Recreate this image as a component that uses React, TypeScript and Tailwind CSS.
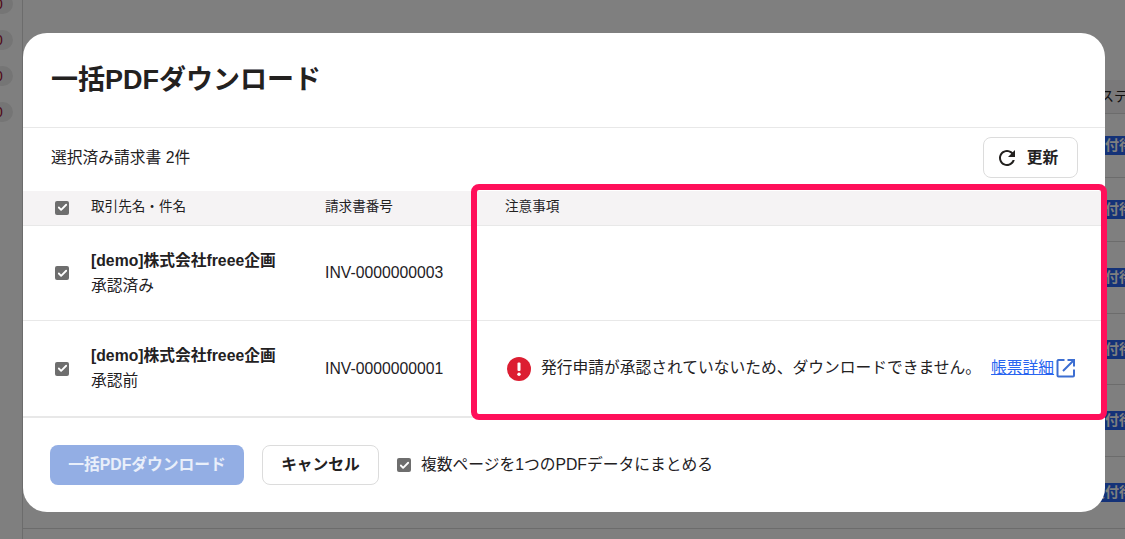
import { Check } from "lucide-react";

const font = "font-['Liberation_Sans','Noto_Sans_CJK_JP',sans-serif]";

function Checkbox() {
  return (
    <span className="flex h-[14px] w-[14px] shrink-0 items-center justify-center rounded-[2px] bg-[#6e6e6e]">
      <Check size={11} strokeWidth={4} className="text-white" />
    </span>
  );
}

// what's behind the dialog, only a sliver of it shows
function Backdrop() {
  const rowHeights = ["h-[64px]", "h-[64px]", "h-[72px]", "h-[71px]", "h-[72px]", "h-[72px]"];
  return (
    <div className="flex h-[539px] w-[1125px] overflow-hidden bg-white">
      <div className="flex w-[23px] shrink-0 flex-col gap-4 border-r border-[#d8d8d8]">
        {[0, 1, 2, 3].map((i) => (
          <div
            key={i}
            className="-ml-[8px] flex h-[20px] w-[21px] -translate-y-[6px] items-center rounded-full bg-[#ebebeb] pl-[3px] text-[14px] leading-none text-[#a01030]"
          >
            0
          </div>
        ))}
      </div>
      <div className="flex min-w-0 flex-1 flex-col">
        <div className="h-[80px] shrink-0" />
        <div className="flex h-[34px] shrink-0 items-center border-b border-[#d8d8d8] bg-[#f5f3f4] pl-[1077px] text-[14px] whitespace-nowrap text-[#23211f]">
          ステータス
        </div>
        {rowHeights.map((h, i) => (
          <div key={i} className={`flex ${h} shrink-0 items-center border-b border-[#d8d8d8] pl-[1064px]`}>
            <span className="flex h-[19px] items-center bg-[#2864f0] px-[4px] text-[14px] font-bold whitespace-nowrap text-white">
              受付待ち
            </span>
          </div>
        ))}
      </div>
    </div>
  );
}

function ErrorIcon() {
  return (
    <svg width="24" height="24" viewBox="0 0 24 24" className="shrink-0">
      <circle cx="12" cy="12" r="12" fill="#dc1e32" />
      <rect x="10.5" y="5.5" width="3" height="8.5" rx="1" fill="#fff" />
      <circle cx="12" cy="17.2" r="1.7" fill="#fff" />
    </svg>
  );
}

function ExternalIcon() {
  return (
    <svg width="20" height="20" viewBox="0 0 20 20" fill="none" stroke="#3c6ed2" strokeWidth="2" className="shrink-0">
      <path d="M8.5 2H2.5A1 1 0 0 0 1.5 3V17.5A1 1 0 0 0 2.5 18.5H17A1 1 0 0 0 18 17.5V11.5" />
      <path d="M7 13L17.5 2.5M11.5 2H18V8.5" />
    </svg>
  );
}

function RefreshIcon() {
  return (
    <svg width="24" height="24" viewBox="0 0 24 24" fill="#23211f" className="shrink-0">
      <path d="M17.65 6.35C16.2 4.9 14.21 4 12 4c-4.42 0-7.99 3.58-7.99 8s3.57 8 7.99 8c3.73 0 6.84-2.55 7.73-6h-2.08c-.82 2.33-3.04 4-5.65 4-3.31 0-6-2.69-6-6s2.69-6 6-6c1.66 0 3.14.69 4.22 1.78L13 11h7V4l-2.35 2.35z" />
    </svg>
  );
}

const invoices = [
  { name: "[demo]株式会社freee企画", status: "承認済み", no: "INV-0000000003", blocked: false },
  { name: "[demo]株式会社freee企画", status: "承認前", no: "INV-0000000001", blocked: true },
];

export default function App() {
  return (
    <div className={`relative h-[539px] w-[1125px] overflow-hidden ${font}`}>
      <Backdrop />
      <div className="absolute inset-0 bg-black/50" />

      <div className="absolute top-[33px] left-[23px] flex h-[479px] w-[1082px] flex-col overflow-hidden rounded-[24px] bg-white text-[#23211f]">
        {/* Header */}
        <div className="flex h-[95px] shrink-0 items-center border-b border-[#e8e8e8] px-[28px]">
          <h1 className="text-[27px] font-bold">一括PDFダウンロード</h1>
        </div>

        {/* Toolbar */}
        <div className="flex h-[63px] shrink-0 items-center justify-between pr-[27px] pl-[28px]">
          <span className="-translate-y-[2px] text-[15.75px]">選択済み請求書 2件</span>
          <button className="flex h-[41px] w-[95px] -translate-y-[2px] items-center justify-center gap-[8px] rounded-[8px] border border-[#dcdcdc] pr-[8px] text-[15.75px] font-bold">
            <RefreshIcon />
            更新
          </button>
        </div>

        {/* Table */}
        <div className="flex h-[35px] shrink-0 items-center border-b border-[#e8e8e8] bg-[#f5f3f4] pb-[1px] text-[13.6px]">
          <div className="w-[68px] pl-[32px]">
            <Checkbox />
          </div>
          <div className="w-[234px]">取引先名・件名</div>
          <div className="w-[180px]">請求書番号</div>
          <div>注意事項</div>
        </div>
        <div className="shrink-0">
          {invoices.map((inv) => (
            <div
              key={inv.no}
              className="flex h-[95px] items-center border-b border-[#e8e8e8] text-[15.75px] last:h-[97px] last:border-b-2"
            >
              <div className="w-[68px] pl-[32px]">
                <Checkbox />
              </div>
              <div className="flex w-[234px] flex-col gap-[1px] leading-[24px]">
                <span className="font-bold">{inv.name}</span>
                <span>{inv.status}</span>
              </div>
              <div className="w-[180px]">{inv.no}</div>
              {inv.blocked && (
                <div className="ml-[2px] flex items-center gap-[10px]">
                  <ErrorIcon />
                  <span className="-translate-y-px whitespace-nowrap">発行申請が承認されていないため、ダウンロードできません。</span>
                  <a className="flex -translate-y-px items-center gap-[2px] whitespace-nowrap text-[#2864f0] underline">
                    帳票詳細
                    <ExternalIcon />
                  </a>
                </div>
              )}
            </div>
          ))}
        </div>

        {/* Footer */}
        <div className="flex flex-1 items-center pl-[27px]">
          <button className="h-[40px] w-[194px] rounded-[8px] bg-[#93aee4] text-[15.75px] font-bold text-white/80">
            一括PDFダウンロード
          </button>
          <button className="mr-[18px] ml-[18px] h-[40px] w-[117px] rounded-[8px] border border-[#dcdcdc] text-[15.75px] font-bold">
            キャンセル
          </button>
          <Checkbox />
          <span className="ml-[10px] text-[15.75px]">複数ページを1つのPDFデータにまとめる</span>
        </div>
      </div>

      {/* Annotation frame */}
      <div className="absolute top-[184px] left-[471px] h-[236px] w-[636px] rounded-[8px] border-[6px] border-[#ff0f5a]" />
    </div>
  );
}
